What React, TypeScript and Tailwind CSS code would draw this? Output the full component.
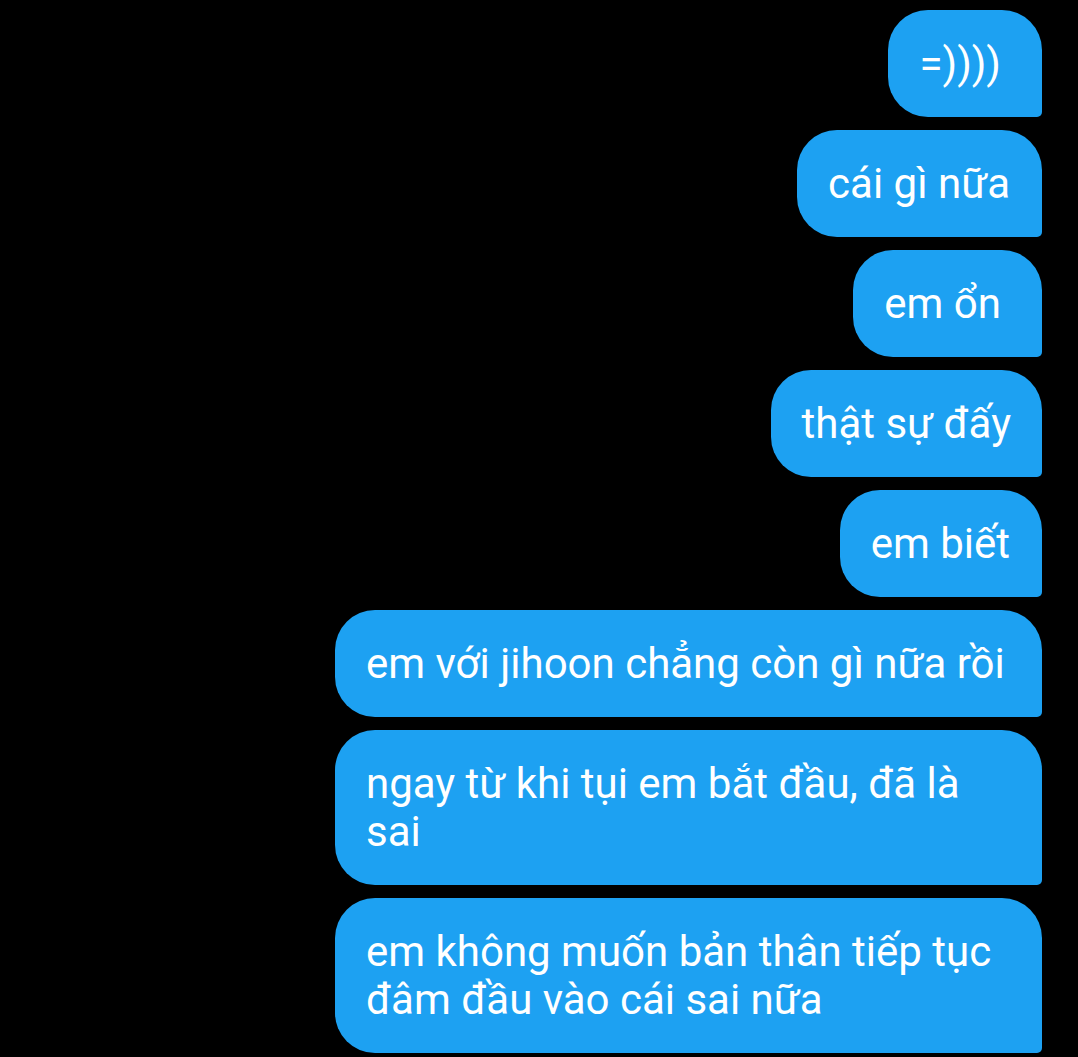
const msgs: { t: string; c?: string }[] = [
  { t: "=))))", c: "pr-[41px]" },
  { t: "cái gì nữa", c: "pr-[32px]" },
  { t: "em ổn", c: "pr-[41px]" },
  { t: "thật sự đấy", c: "pr-[31px]" },
  { t: "em biết", c: "pr-[32px]" },
  { t: "em với jihoon chẳng còn gì nữa rồi", c: "w-[707px] pr-[32px]" },
  { t: "ngay từ khi tụi em bắt đầu, đã là sai", c: "pr-[32px]" },
  { t: "em không muốn bản thân tiếp tục đâm đầu vào cái sai nữa", c: "pr-[32px]" },
];

export default function App() {
  return (
    <div
      className="w-[1078px] h-[1057px] bg-black overflow-hidden pt-[10px] pr-[36px] flex flex-col items-end gap-[13px]"
      style={{ fontFamily: "Roboto, 'Noto Sans', sans-serif" }}
    >
      {msgs.map((m, i) => (
        <div
          key={i}
          className={`${m.c} max-w-[707px] bg-[#1da1f2] text-white text-[42px] leading-[48px] pl-[31px] py-[29.5px] rounded-tl-[40px] rounded-tr-[40px] rounded-bl-[40px] rounded-br-[5px]`}
        >
          {m.t}
        </div>
      ))}
    </div>
  );
}
